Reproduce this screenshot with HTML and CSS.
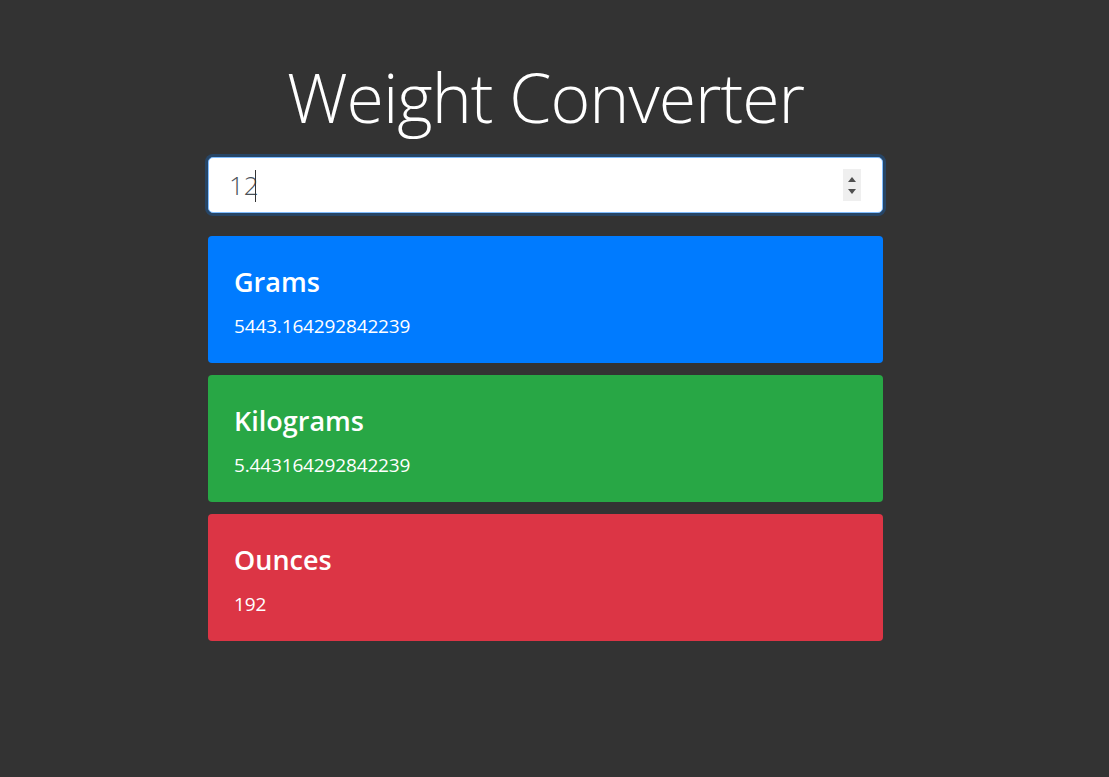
FILE: index.html
```html
<!DOCTYPE html>
<html lang="en">
<head>
<meta charset="utf-8">
<title>Weight Converter</title>
<link rel="stylesheet" href="styles.css">
</head>
<body>
<div class="page">
  <main class="container">
    <h1 class="title">Weight Converter</h1>
    <div class="field">
      <input class="lbs-input" type="number" value="12" autofocus>
      <span class="caret"></span>
      <span class="spinner">
        <span class="spin-up"></span>
        <span class="spin-down"></span>
      </span>
    </div>
    <section class="card card-blue">
      <h3 class="card-title">Grams</h3>
      <p class="card-value">5443.164292842239</p>
    </section>
    <section class="card card-green">
      <h3 class="card-title">Kilograms</h3>
      <p class="card-value">5.443164292842239</p>
    </section>
    <section class="card card-red">
      <h3 class="card-title">Ounces</h3>
      <p class="card-value">192</p>
    </section>
  </main>
</div>
</body>
</html>
```

FILE: styles.css
```css
html, body {
  margin: 0;
  padding: 0;
  background: #333333;
  font-family: "Open Sans", "Noto Sans", sans-serif;
  color: #fff;
}

.page {
  display: flex;
  justify-content: center;
  padding-right: 18px;
  padding-top: 54px;
}

.container {
  width: 675px;
  display: flex;
  flex-direction: column;
}

.title {
  margin: 0 0 17px 0;
  text-align: center;
  font-weight: 300;
  font-size: 68px;
  line-height: 86px;
  letter-spacing: -1px;
  color: #fff;
}

.field {
  position: relative;
  margin-bottom: 23px;
}

.lbs-input {
  display: block;
  box-sizing: border-box;
  width: 100%;
  height: 56px;
  padding: 0 21px 0 20px;
  font-family: "Open Sans", "Noto Sans", sans-serif;
  font-size: 26px;
  font-weight: 300;
  color: #495057;
  background: #fff;
  border: 1px solid #80bdff;
  border-radius: 5px;
  outline: none;
  box-shadow: 0 0 0 3px rgba(0, 123, 255, 0.25);
  caret-color: transparent;
  -moz-appearance: textfield;
}

.lbs-input::-webkit-inner-spin-button,
.lbs-input::-webkit-outer-spin-button {
  -webkit-appearance: none;
  margin: 0;
}

.caret {
  position: absolute;
  left: 47px;
  top: 13px;
  width: 1px;
  height: 32px;
  background: #333;
}

.spinner {
  position: absolute;
  right: 22px;
  top: 12px;
  width: 18px;
  height: 32px;
  background: #efefef;
  display: flex;
  flex-direction: column;
  align-items: center;
  justify-content: center;
  gap: 7px;
}

.spin-up {
  width: 0;
  height: 0;
  border-left: 4px solid transparent;
  border-right: 4px solid transparent;
  border-bottom: 5px solid #505050;
}

.spin-down {
  width: 0;
  height: 0;
  border-left: 4px solid transparent;
  border-right: 4px solid transparent;
  border-top: 5px solid #505050;
}

.card {
  border-radius: 4px;
  padding: 29px 26px 24px 26px;
  margin-bottom: 12px;
  height: 127px;
  box-sizing: border-box;
}

.card-blue { background: #007bff; }
.card-green { background: #28a745; }
.card-red { background: #dc3545; }

.card-title {
  margin: 0 0 14px 0;
  font-size: 27px;
  font-weight: 600;
  line-height: 34px;
}

.card-value {
  margin: 0;
  font-size: 19px;
  line-height: 26px;
  letter-spacing: -0.15px;
}
```
